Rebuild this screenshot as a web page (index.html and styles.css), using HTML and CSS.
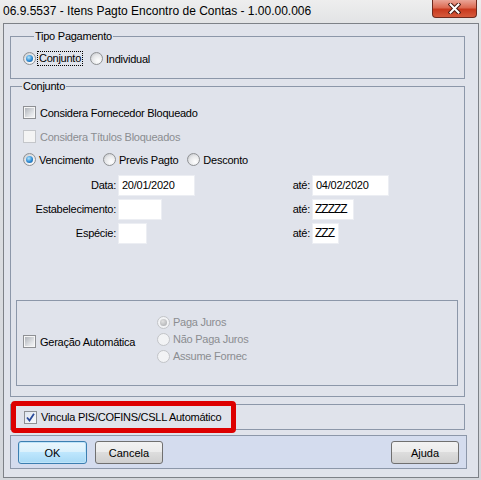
FILE: index.html
```html
<!DOCTYPE html>
<html lang="pt-BR">
<head>
  <meta charset="UTF-8" />
  <title>Itens Pagto Encontro de Contas</title>
  <link rel="stylesheet" href="styles.css">
</head>
<body>

  <div class="window">

    <!-- Title bar -->
    <div class="titlebar">
      <span class="title">06.9.5537 - Itens Pagto Encontro de Contas - 1.00.00.006</span>
      <button class="close-btn" aria-label="Fechar">
        <svg width="13" height="11" viewBox="0 0 13 11">
          <path d="M2.5 1.5 L10.5 9.5 M10.5 1.5 L2.5 9.5" stroke="#4a1a12" stroke-width="4" stroke-linecap="square"/>
          <path d="M2.5 1.5 L10.5 9.5 M10.5 1.5 L2.5 9.5" stroke="#ffffff" stroke-width="2" stroke-linecap="square"/>
        </svg>
      </button>
    </div>

    <div class="client">

      <!-- Tipo Pagamento -->
      <fieldset class="group group-tipo">
        <legend>Tipo Pagamento</legend>
        <div class="opt-row">
          <label class="opt"><span class="radio on"></span><span class="focus">Conjunto</span></label>
          <label class="opt"><span class="radio"></span>Individual</label>
        </div>
      </fieldset>

      <!-- Conjunto -->
      <fieldset class="group group-conj">
        <legend>Conjunto</legend>
        <label class="opt row-1"><span class="check"></span>Considera Fornecedor Bloqueado</label>
        <label class="opt row-2 disabled"><span class="check"></span>Considera Títulos Bloqueados</label>
        <div class="opt-row row-3">
          <label class="opt"><span class="radio on"></span>Vencimento</label>
          <label class="opt"><span class="radio"></span>Previs Pagto</label>
          <label class="opt"><span class="radio"></span>Desconto</label>
        </div>

        <div class="fields">
          <span class="lbl">Data:</span>
          <span class="field w-date">20/01/2020</span>
          <span class="lbl">até:</span>
          <span class="field w-date">04/02/2020</span>

          <span class="lbl">Estabelecimento:</span>
          <span class="field w-estab"></span>
          <span class="lbl">até:</span>
          <span class="field w-estab2 mask">ZZZZZ</span>

          <span class="lbl">Espécie:</span>
          <span class="field w-esp"></span>
          <span class="lbl">até:</span>
          <span class="field w-esp2 mask">ZZZ</span>
        </div>

        <div class="auto-box">
          <label class="opt auto-cb"><span class="check"></span>Geração Automática</label>
          <div class="juros">
            <label class="opt disabled"><span class="radio on"></span>Paga Juros</label>
            <label class="opt disabled"><span class="radio"></span>Não Paga Juros</label>
            <label class="opt disabled"><span class="radio"></span>Assume Fornec</label>
          </div>
        </div>
      </fieldset>

      <!-- Vincula -->
      <div class="group-vinc">
        <label class="opt">
          <span class="check checked">
            <svg width="9" height="9" viewBox="0 0 9 9">
              <path d="M1 4.5 L3.5 7.5 L8 0.8" fill="none" stroke="#2a4a9a" stroke-width="1.8"/>
            </svg>
          </span>
          Vincula PIS/COFINS/CSLL Automático
        </label>
        <span class="highlight"></span>
      </div>

      <!-- Buttons -->
      <div class="buttons">
        <button class="btn btn-default w-ok">OK</button>
        <button class="btn">Cancela</button>
        <button class="btn btn-right">Ajuda</button>
      </div>

    </div>
  </div>

</body>
</html>
```

FILE: styles.css
```css
* {
  margin: 0;
  padding: 0;
  box-sizing: border-box;
}

body {
  font-family: "Liberation Sans", Arial, sans-serif;
  font-size: 11px;
  letter-spacing: -0.25px;
  color: #000;
  background: #d9dadc;
}

.window {
  width: 481px;
  height: 480px;
  display: flex;
  flex-direction: column;
  padding: 0 2px 2px 3px;
  background: linear-gradient(#eeeeee, #e2e3e5 24px, #d3d6db);
}

/* Title bar */
.titlebar {
  height: 23px;
  display: flex;
  align-items: flex-start;
}

.title {
  font-size: 12px;
  line-height: 14px;
  letter-spacing: 0;
  padding-top: 4px;
  color: #000;
}

.close-btn {
  margin-left: auto;
  margin-right: 2px;
  width: 45px;
  height: 18px;
  border: 1px solid #6e2a1e;
  border-top: none;
  border-radius: 0 0 4px 4px;
  background: linear-gradient(#eaa597, #dc6a52 45%, #c8391e 55%, #d65a3c);
  display: flex;
  align-items: center;
  justify-content: center;
}

/* Client area */
.client {
  flex: 1;
  border: 1px solid #7d8187;
  background: #e0e3eb;
  padding: 6px 13px 8px 6px;
  display: flex;
  flex-direction: column;
}

.group {
  border: 1px solid #8c97a9;
  padding: 0;
  min-width: 0;
}

.group legend {
  line-height: 13px;
  padding: 0 1px;
  margin-left: 11px;
}

.group-tipo {
  height: 49px;
  padding: 8px 0 0 12px;
}

.group-conj {
  height: 317px;
  margin-top: 1px;
  padding: 12px 0 0 0;
}

.group-conj > .opt,
.group-conj > .opt-row {
  margin-left: 12px;
}

.row-2 { margin-top: 9px; }
.row-3 { margin-top: 8px; }

/* Options */
.opt-row {
  display: flex;
  align-items: center;
}

.opt {
  display: flex;
  align-items: center;
  height: 15px;
  margin-right: 9px;
  white-space: nowrap;
}

.opt.disabled {
  color: #8b8d91;
}

.focus {
  border: 1px dotted #000;
  padding: 0 1px;
  line-height: 13px;
  margin-left: -2px;
  margin-right: -2px;
}

.radio {
  flex: none;
  width: 13px;
  height: 13px;
  margin-right: 3px;
  border-radius: 50%;
  border: 1px solid #8f9194;
  background: radial-gradient(circle at 65% 70%, #ffffff, #e6e7e9 55%, #b9bcc1);
  display: flex;
  align-items: center;
  justify-content: center;
}

.radio.on::after {
  content: "";
  width: 7px;
  height: 7px;
  border-radius: 50%;
  background: radial-gradient(circle at 40% 35%, #b4e6fc, #2d8ad3 55%, #0f4c8c);
}

.disabled .radio {
  border-color: #c2c4c8;
  background: #f2f3f5;
}

.disabled .radio.on::after {
  background: radial-gradient(circle at 40% 35%, #e2e2e2, #a6a8ab);
}

.check {
  flex: none;
  width: 13px;
  height: 13px;
  margin-right: 4px;
  border: 1px solid #8e9094;
  background: #f6f6f6;
  padding: 1px;
  display: flex;
  align-items: center;
  justify-content: center;
}

.check::before {
  content: "";
  width: 9px;
  height: 9px;
  background: linear-gradient(135deg, #b0b4ba, #e3e5e8 70%, #f2f3f4);
}

.check.checked::before {
  display: none;
}

.check.checked {
  background: linear-gradient(135deg, #dfe6ef, #f7f9fb);
}

.disabled .check {
  border-color: #c4c6ca;
  background: #f4f4f4;
}

.disabled .check::before {
  background: #f4f4f4;
}

/* Data / Estabelecimento / Espécie */
.fields {
  margin-top: 8px;
  display: grid;
  grid-template-columns: 106px 161px 31px auto;
  grid-auto-rows: 21px;
  column-gap: 1px;
  row-gap: 3px;
}

.lbl {
  text-align: right;
  line-height: 21px;
  padding-right: 1px;
}

.field {
  justify-self: start;
  height: 21px;
  background: #fff;
  border: 1px solid #eceef3;
  line-height: 19px;
  padding-left: 3px;
}

.w-date { width: 77px; }
.w-estab { width: 44px; }
.w-esp { width: 29px; }
.w-estab2 { width: 42px; }
.w-esp2 { width: 27px; }

/* picture mask shown as joined Z strokes */
.mask {
  padding-left: 2px;
  font-size: 12px;
  letter-spacing: -1px;
}

/* Geração Automática */
.auto-box {
  margin: 56px 6px 0 5px;
  height: 86px;
  border: 1px solid #8c97a9;
  padding-left: 6px;
  display: flex;
  align-items: center;
}

.auto-cb {
  width: 134px;
  margin: 0 0 3px 0;
}

.juros {
  display: flex;
  flex-direction: column;
  margin-bottom: 8px;
}

.juros .opt {
  height: 17px;
}

/* Vincula */
.group-vinc {
  position: relative;
  margin-top: 7px;
  height: 26px;
  border: 1px solid #8c97a9;
  padding-left: 13px;
  display: flex;
  align-items: center;
}

.highlight {
  position: absolute;
  left: 0;
  top: -4px;
  width: 225px;
  height: 32px;
  border: 5px solid #dd0000;
  border-radius: 4px;
}

/* Buttons */
.buttons {
  margin-top: 5px;
  margin-right: -2px;
  height: 34px;
  border: 1px solid #8c97a9;
  background: #d4dcee;
  padding: 5px 7px;
  display: flex;
}

.btn {
  width: 68px;
  height: 23px;
  margin-right: 8px;
  font-family: "Liberation Sans", Arial, sans-serif;
  font-size: 11px;
  color: #000;
  border: 1px solid #707070;
  border-radius: 3px;
  background: linear-gradient(#f2f2f2, #ebebeb 50%, #dddddd 50%, #cfcfcf);
}

.btn-default {
  width: 69px;
  border-color: #3c7fb1;
  background: linear-gradient(#eaf6fd, #d9f0fc 50%, #bee6fd 50%, #a7d9f5);
  box-shadow: inset 0 0 0 1px #bfe4f9;
}

.btn-right {
  margin-left: auto;
  margin-right: 0;
}
```
